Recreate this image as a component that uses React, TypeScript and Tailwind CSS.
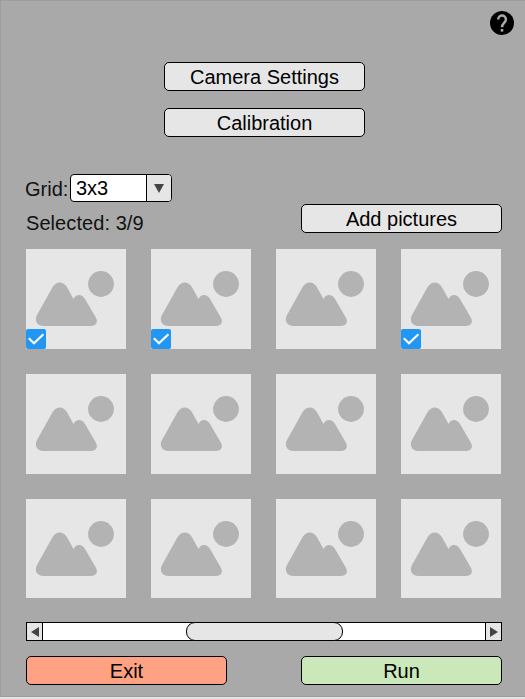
import type { ReactNode } from 'react';

function Button({ children, className = 'bg-[#e6e6e6]' }: { children: ReactNode; className?: string }) {
  return (
    <button
      className={`flex h-[29px] w-[201px] items-center justify-center rounded-[5px] border border-black text-xl leading-none text-black ${className}`}
    >
      {children}
    </button>
  );
}

function Picture({ selected, short }: { selected: boolean; short: boolean }) {
  return (
    <div className={`relative w-[100px] overflow-hidden bg-[#e6e6e6] ${short ? 'h-[99px]' : 'h-[100px]'}`}>
      <svg viewBox="0 0 100 100" className="block h-[100px] w-[100px]" fill="#b3b3b3">
        <circle cx="75" cy="35" r="12.900" />
        <path d="M17.500 77C11 77 8 71.500 11 66L26.500 38.200C30 31.800 37.500 31.800 41 38.200L47.500 50C50 44.600 56 44.600 59 50L69.800 68.500C72.500 73 70 77 65 77Z" />
      </svg>
      {selected && (
        <span className="absolute bottom-0 left-0 flex h-5 w-5 items-center justify-center rounded-[2px] bg-[#2196f3]">
          <svg viewBox="0 0 20 20" className="h-5 w-5" fill="none" stroke="white" strokeWidth="2.200">
            <path d="M2.800 9.300L8 14.200L17.400 5.200" />
          </svg>
        </span>
      )}
    </div>
  );
}

const selectedPictures = [0, 1, 3];

export default function App() {
  return (
    <main className="h-[699px] w-[525px] overflow-hidden border-b-2 border-[#e3e3e3] bg-[#a9a9a9] font-['Liberation_Sans',Arial,sans-serif] text-xl leading-none text-[#111]">
      <div className="flex h-[697px] flex-col border-t border-b border-l border-[#9d9d9d] pl-[25px]">
        <header className="flex h-[61px] justify-end pt-[10px] pr-[11px]">
          <button aria-label="Help" className="h-6 w-6">
            <svg viewBox="0 0 24 24" className="h-6 w-6">
              <circle cx="12" cy="12" r="12" fill="#000" />
              <path d="M8.200 8.500C8.200 3.300 15.900 3.300 15.900 8.500C15.900 11.800 12 12.200 12 16.300" fill="none" stroke="#a9a9a9" strokeWidth="2.500" />
              <path d="M10.700 18h2.600v2.600h-2.600z" fill="#a9a9a9" />
            </svg>
          </button>
        </header>
        <div className="ml-[138px] flex flex-col gap-[17px]">
          <Button>Camera Settings</Button>
          <Button>Calibration</Button>
        </div>
        <div className="mt-[37px] flex h-[75px] w-[476px] justify-between">
          <div>
            <div className="flex h-7">
              <span className="-ml-px mr-px w-11 pt-[5px]">Grid:</span>
              <div className="flex h-7 w-[102px] overflow-hidden rounded-[4px] border border-black bg-white text-black">
                <span className="w-[75px] pt-[3px] pl-[5px]">3x3</span>
                <span className="flex flex-1 items-center justify-center border-l border-black bg-[#e6e6e6] pr-px">
                  <svg viewBox="0 0 10 9" className="h-[9px] w-[10px]" fill="#444"><path d="M0 0h10L5 9z" /></svg>
                </span>
              </div>
            </div>
            <p className="mt-[11px] tracking-[0.07px]">Selected: 3/9</p>
          </div>
          <div className="pt-[30px]">
            <Button>Add pictures</Button>
          </div>
        </div>
        <div className="grid w-[475px] grid-cols-[repeat(4,100px)] gap-[25px]">
          {Array.from({ length: 12 }, (_, i) => (
            <Picture key={i} selected={selectedPictures.includes(i)} short={i >= 8} />
          ))}
        </div>
        <div className="mt-6 flex h-[19px] w-[476px] shrink-0 border border-black bg-white">
          <button aria-label="Scroll left" className="flex w-4 items-center justify-center border-r border-black bg-[#e6e6e6]">
            <svg viewBox="0 0 8 10" className="h-[10px] w-2" fill="#444"><path d="M8 0v10L0 5z" /></svg>
          </button>
          <div className="-my-px flex-1 pl-[143px]">
            <div className="h-[19px] w-[157px] rounded-[9px] border border-black bg-[#e6e6e6]" />
          </div>
          <button aria-label="Scroll right" className="flex w-4 items-center justify-center border-l border-black bg-[#e6e6e6]">
            <svg viewBox="0 0 8 10" className="h-[10px] w-2" fill="#444"><path d="M0 0v10l8-5z" /></svg>
          </button>
        </div>
        <footer className="mt-[15px] flex w-[476px] justify-between">
          <Button className="bg-[#ffa183]">Exit</Button>
          <Button className="bg-[#cbe8ba]">Run</Button>
        </footer>
      </div>
    </main>
  );
}
